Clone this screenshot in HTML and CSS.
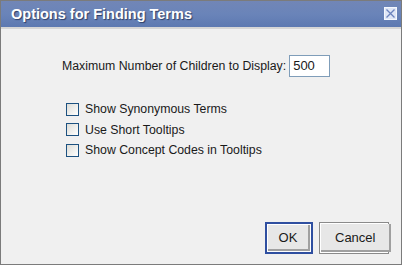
FILE: index.html
```html
<!DOCTYPE html>
<html>
<head>
<meta charset="utf-8">
<link rel="stylesheet" href="styles.css">
</head>
<body>
<div class="window">
  <div class="titlebar">
    <span class="title">Options for Finding Terms</span>
    <span class="close">
      <svg width="13" height="13" viewBox="0 0 13 13">
        <rect x="0.5" y="0.5" width="12" height="12" fill="#dfe6f6" stroke="#f4f7fd"/>
        <path d="M2.5 2.5 L10.5 10.5 M10.5 2.5 L2.5 10.5" stroke="#6b83bd" stroke-width="1.3"/>
      </svg>
    </span>
  </div>
  <div class="content">
    <div class="field">
      <span class="label">Maximum Number of Children to Display:</span>
      <span class="input">500</span>
    </div>
    <div class="checks">
      <div class="check"><span class="box"></span><span>Show Synonymous Terms</span></div>
      <div class="check"><span class="box"></span><span>Use Short Tooltips</span></div>
      <div class="check"><span class="box"></span><span>Show Concept Codes in Tooltips</span></div>
    </div>
    <div class="buttons">
      <span class="btn default"><span class="inner">OK</span></span>
      <span class="btn"><span class="inner">Cancel</span></span>
    </div>
  </div>
</div>
</body>
</html>
```

FILE: styles.css
```css
html, body {
  margin: 0;
  padding: 0;
}
body {
  width: 402px;
  height: 265px;
  overflow: hidden;
  font-family: "Liberation Sans", Arial, sans-serif;
}
.window {
  box-sizing: border-box;
  width: 402px;
  height: 265px;
  border: 1px solid #7b7b7b;
  background: #f0f0f0;
  display: flex;
  flex-direction: column;
}
.titlebar {
  height: 26px;
  flex: none;
  display: flex;
  align-items: center;
  padding: 0 4px 0 10px;
  background: linear-gradient(180deg, #7186b6 0%, #6a84b9 50%, #5d79b1 100%);
  border-bottom: 2px solid #d6d6d6;
}
.title {
  color: #ffffff;
  font-weight: bold;
  font-size: 14.5px;
  text-shadow: 1px 1px 1px #2e3f66;
}
.close {
  margin-left: auto;
  display: flex;
  margin-top: -2px;
}
.content {
  flex: 1;
  display: flex;
  flex-direction: column;
  font-size: 12.3px;
  color: #1a1a1a;
}
.field {
  display: flex;
  align-items: center;
  padding: 26px 0 0 61px;
}
.label {
  margin-right: 3px;
}
.input {
  box-sizing: border-box;
  width: 41px;
  height: 22px;
  border: 1px solid #7f9db9;
  background: #ffffff;
  padding: 1px 0 0 3px;
  line-height: 18px;
  font-size: 13px;
}
.checks {
  display: flex;
  flex-direction: column;
  gap: 4.5px;
  padding: 24px 0 0 65px;
}
.check {
  display: flex;
  align-items: center;
  height: 16px;
}
.box {
  box-sizing: border-box;
  width: 13px;
  height: 13px;
  border: 1px solid #1c5180;
  background: linear-gradient(135deg, #dcdcd7 0%, #f5f5f3 70%, #ffffff 100%);
  margin-right: 6px;
}
.buttons {
  margin-top: auto;
  display: flex;
  justify-content: flex-end;
  gap: 6px;
  padding: 0 12px 10px 0;
}
.btn {
  box-sizing: border-box;
  height: 32px;
  border: 1px solid #8a8a8a;
  background: #ffffff;
  padding: 1px;
  display: flex;
  font-size: 13px;
}
.btn .inner {
  flex: 1;
  display: flex;
  align-items: center;
  justify-content: center;
  background: #e7e7e7;
  border-right: 2px solid #a0a0a0;
  border-bottom: 2px solid #a0a0a0;
  padding: 0 14px;
}
.btn.default {
  width: 48px;
  border: 2px solid #2f4fa0;
  padding: 1px;
  background: #ffffff;
}
.btn.default .inner {
  padding: 0;
}
.btn:not(.default) {
  width: 70px;
}
```
